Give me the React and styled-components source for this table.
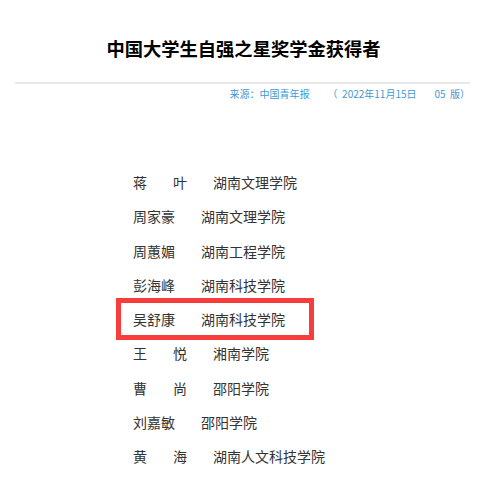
import styled, { createGlobalStyle } from "styled-components";

const GlobalStyle = createGlobalStyle`
    body {
        margin: 0;
        background: #fff;
        font-family: "Noto Sans CJK SC", "Liberation Sans", sans-serif;
    }
`;

const Page = styled.div`
    width: 455px;
    margin-left: 15px;
`;

const Titulo = styled.h1`
    margin: 0;
    padding-top: 38px;
    padding-left: 2px;
    font-size: 18.3px;
    line-height: 20px;
    font-weight: bold;
    color: #000;
    text-align: center;
`;

const Linha = styled.div`
    margin-top: 24px;
    height: 2px;
    background: #e9e9e9;
`;

const Fonte = styled.div`
    margin-top: 4px;
    display: flex;
    justify-content: flex-end;
    gap: 18px;
    font-size: 10px;
    line-height: 12px;
    color: #3d9ad3;
    white-space: pre;
`;

const Lista = styled.div`
    margin-top: 65px;
    padding-left: 118px;
`;

const Linha2 = styled.div`
    position: relative;
    display: flex;
    gap: 26px;
    height: 34.25px;
    align-items: center;
    font-size: 14px;
    color: #333;

    ${props => props.destaque && `
        &::after {
            content: "";
            position: absolute;
            left: -17px;
            top: -4px;
            width: 198px;
            height: 42px;
            box-sizing: border-box;
            border: 5px solid #f93d3d;
        }
    `}
`;

const Nome = styled.span`
    display: flex;
    gap: 26px;
`;

const dados = [
    { nome: ["蒋", "叶"], escola: "湖南文理学院" },
    { nome: ["周家豪"], escola: "湖南文理学院" },
    { nome: ["周蕙媚"], escola: "湖南工程学院" },
    { nome: ["彭海峰"], escola: "湖南科技学院" },
    { nome: ["吴舒康"], escola: "湖南科技学院", destaque: true },
    { nome: ["王", "悦"], escola: "湘南学院" },
    { nome: ["曹", "尚"], escola: "邵阳学院" },
    { nome: ["刘嘉敏"], escola: "邵阳学院" },
    { nome: ["黄", "海"], escola: "湖南人文科技学院" },
];

function App() {
    return (
        <>
            <GlobalStyle />
            <Page>
                <Titulo>中国大学生自强之星奖学金获得者</Titulo>
                <Linha />
                <Fonte>
                    <span>来源：中国青年报</span>
                    <span>（  2022年11月15日        05  版）</span>
                </Fonte>
                <Lista>
                    {dados.map((dado, i) => (
                        <Linha2 key={i} destaque={dado.destaque}>
                            <Nome>
                                {dado.nome.map((c, j) => <span key={j}>{c}</span>)}
                            </Nome>
                            <span>{dado.escola}</span>
                        </Linha2>
                    ))}
                </Lista>
            </Page>
        </>
    );
}

export default App;
